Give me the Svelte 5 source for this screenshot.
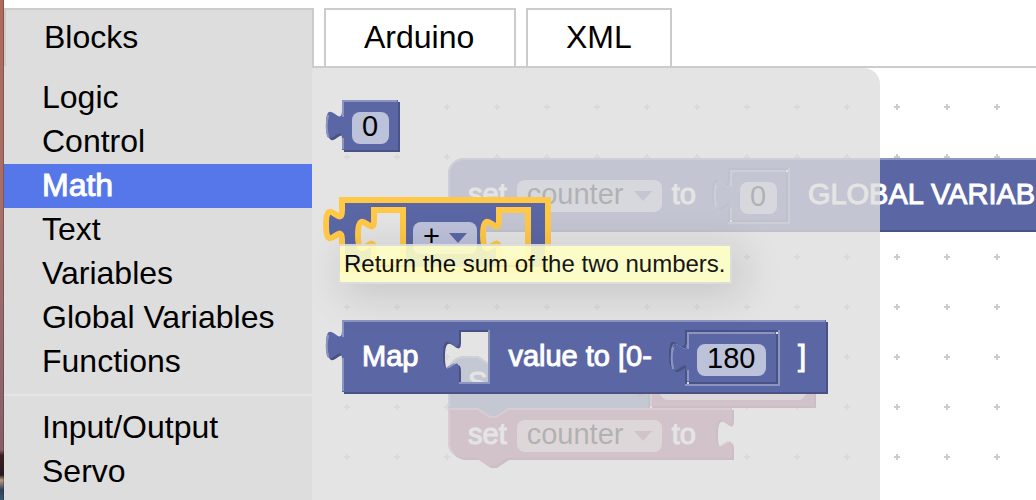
<script>
  const tabs = ['Blocks', 'Arduino', 'XML'];
  const groups = [
    ['Logic', 'Control', 'Math', 'Text', 'Variables', 'Global Variables', 'Functions'],
    ['Input/Output', 'Servo'],
  ];
  let tab = $state('Blocks');
  let category = $state('Math');

  const NUMBER = { fill: '#5b67a5', light: '#8c95c0', dark: '#495284' };
  const VARIABLE = { fill: '#a55b80', light: '#c08ca6', dark: '#844966' };
  const SERVO = { fill: '#5b74a5', light: '#8c9ec0', dark: '#495d84' };

  // Path pieces, in block units (one unit is two pixels).
  const TAB_DOWN = 'v 5 c 0,10 -8,-8 -8,7.5 s 8,-2.5 8,7.5';
  const NOTCH_BACK = 'H 29.5 l -6,4 -3,0 -6,-4';

  const hole = ([x, w, h]) => `M ${x},5 ${TAB_DOWN} v ${h - 20} h ${w} v ${-h} z`;
  const holeLight = ([x, w, h]) =>
    `M ${x + w + 0.5},5 v ${h + 0.5} H ${x} M ${x - 6},24 l 3.7,-2.1`;

  function outline(b) {
    const holes = (b.holes ?? []).map(hole).join(' ');
    if (b.kind === 'output')
      return `M 0,0 H ${b.w} V ${b.h} H 0 V 20 c 0,-10 -8,8 -8,-7.5 s 8,2.5 8,-7.5 z ${holes}`;
    if (b.kind === 'root') return `M 0,8 A 8,8 0 0 1 8,0 H ${b.w} V ${b.h} H 0 z ${holes}`;
    if (b.kind === 'head')
      return `M 0,8 A 8,8 0 0 1 8,0 H 15 l 6,4 3,0 6,-4 H ${b.w} V ${b.h} ${NOTCH_BACK} H 0 z`;
    return `M 0,0 H 15 l 6,4 3,0 6,-4 H ${b.w} ${TAB_DOWN} V ${b.h} ${NOTCH_BACK} H 8 a 8,8 0 0 1 -8,-8 z`;
  }

  function highlight(b) {
    const r = b.w - 0.5;
    const low = b.h - 0.5;
    const holes = (b.holes ?? []).map(holeLight).join(' ');
    if (b.kind === 'output')
      return `M 0.5,0.5 H ${r} M 0.5,${low} V 19 m -7.4,-0.5 q -1.5,-5.5 0,-11 m 7.4,1 V 0.5 H 1 ${holes}`;
    if (b.kind === 'root') return `M 0.5,${low} V 8 A 7.5,7.5 0 0 1 8,0.5 H ${r} ${holes}`;
    if (b.kind === 'head')
      return `M 0.5,${low} V 8 A 7.5,7.5 0 0 1 8,0.5 H 15 l 6,4 3,0 6,-4 H ${r}`;
    return `M 0.5,${b.h - 8} V 0.5 H 15 l 6,4 3,0 6,-4 H ${r} M ${b.w - 5.5},19 l 3.7,-2.1 M 2.4,${b.h - 2.4} A 7.5,7.5 0 0 1 0.5,${b.h - 8}`;
  }

  const globalSet = { kind: 'root', w: 324, h: 36, holes: [[140, 30, 27]], ...NUMBER };
  const servoSet = { kind: 'head', w: 100, h: 26, ...SERVO };
  const servoValue = { kind: 'output', w: 82, h: 25, ...VARIABLE };
  const variableSet = { kind: 'tail', w: 142, h: 25, ...VARIABLE };
  const number = { kind: 'output', w: 28, h: 25, ...NUMBER };
  const wideNumber = { kind: 'output', w: 44.5, h: 25, ...NUMBER };
  const sum = { kind: 'output', w: 103, h: 35, holes: [[16, 14.5, 26], [78.5, 14.5, 26]], selected: true, ...NUMBER };
  const map = { kind: 'output', w: 242, h: 36, holes: [[58.5, 14.5, 26], [171.5, 46.5, 27]], ...NUMBER };
</script>

{#snippet shape(b)}
  <svg class="shape" width={b.w * 2} height={b.h * 2} viewBox="0 0 {b.w} {b.h}" aria-hidden="true">
    {#if b.selected}
      <path d={outline(b)} fill={b.fill} fill-rule="evenodd" stroke="#ffc846" stroke-width="3" />
    {:else}
      <path d={outline(b)} fill={b.dark} fill-rule="evenodd" transform="translate(1 1)" />
      <path d={outline(b)} fill={b.fill} fill-rule="evenodd" />
      <path d={highlight(b)} fill="none" stroke={b.light} stroke-width="1" />
    {/if}
  </svg>
{/snippet}

{#snippet dropdown(value, label, colour, size)}
  <span class="dropdown {size}">
    <select aria-label={label}><option>{value}</option></select>
    <svg width="18" height="10" viewBox="0 0 18 10" aria-hidden="true"><path d="M0 0H18L9 10z" fill={colour} /></svg>
  </span>
{/snippet}

<div class="page">
  <div class="backdrop"></div>
  <main>
    <nav class="tabs">
      {#each tabs as name}
        <button class:on={tab === name} onclick={() => (tab = name)}>{name}</button>
      {/each}
    </nav>
    <div class="editor">
      <aside>
        {#each groups as group}
          <ul>
            {#each group as name}
              <li><button class:on={category === name} onclick={() => (category = name)}>{name}</button></li>
            {/each}
          </ul>
        {/each}
      </aside>

      <section class="canvas">
        <svg class="dots" width="100%" height="100%" aria-hidden="true">
          <defs>
            <pattern id="dots" x="10" y="14" width="50" height="50" patternUnits="userSpaceOnUse">
              <path d="M22 25h6M25 22v6" stroke="#ccc" stroke-width="2" />
            </pattern>
          </defs>
          <rect width="100%" height="100%" fill="url(#dots)" />
        </svg>

        <div class="block tall" style="left:136px;top:90px">
          {@render shape(globalSet)}
          <span class="label">set</span>
          {@render dropdown('counter', 'Global variable', '#5b67a5', 'wide')}
          <span class="label">to</span>
          <span class="socket one"></span>
          <span class="label">GLOBAL VARIABLE</span>
        </div>
        <div class="block value" style="left:418px;top:102px">
          {@render shape(number)}
          <input class="digit" aria-label="Initial value" value="0" />
        </div>

        <div class="block" style="left:136px;top:288px">
          {@render shape(servoSet)}
          <span class="label">Set</span>
        </div>
        <div class="block value" style="left:338px;top:288px">
          {@render shape(servoValue)}
          <span class="slot"></span>
        </div>
        <div class="block" style="left:136px;top:340px">
          {@render shape(variableSet)}
          <span class="label">set</span>
          {@render dropdown('counter', 'Variable', '#a55b80', 'wide')}
          <span class="label">to</span>
        </div>

        <div class="flyout"></div>

        <div class="block value" style="left:30px;top:32px">
          {@render shape(number)}
          <input class="digit" aria-label="Number" value="0" />
        </div>
        <div class="block sum" style="left:30px;top:132px">
          {@render shape(sum)}
          <span class="socket empty"></span>
          {@render dropdown('+', 'Operation', '#5b67a5', 'narrow')}
        </div>
        <div class="block tall" style="left:30px;top:252px">
          {@render shape(map)}
          <span class="label">Map</span>
          <span class="socket empty"></span>
          <span class="label">value to [0-</span>
          <span class="socket three"></span>
          <span class="label">]</span>
        </div>
        <div class="block value" style="left:375px;top:264px">
          {@render shape(wideNumber)}
          <input class="digits" aria-label="Upper bound" value="180" />
        </div>

        <div class="tooltip" role="tooltip">Return the sum of the two numbers.</div>
      </section>
    </div>
  </main>
</div>

<style>
  :global(body) {
    background: #fff;
    font-family: "Liberation Sans", Arial, sans-serif;
  }
  .page {
    display: flex;
    min-height: 100vh;
    overflow: hidden;
  }
  .backdrop {
    flex: none;
    width: 4px;
    background:
      linear-gradient(90deg, transparent 70%, rgba(60, 20, 20, 0.5)),
      linear-gradient(#ad6a5d, #a3706b 45%, #85606a 88%, #84606a 90%, #3a2024 91%, #241a22 95%, #b59a86 96%, #2b4257 98%, #385970);
  }
  main {
    flex: 1;
    min-width: 0;
    display: flex;
    flex-direction: column;
  }
  button {
    font: inherit;
    color: #000;
    margin: 0;
    border: 0;
    cursor: pointer;
  }
  .tabs {
    display: grid;
    grid-template-columns: 310px 192px 146px;
    column-gap: 10px;
    padding-top: 8px;
    font-size: 32px;
    line-height: 36px;
    background: linear-gradient(#ccc, #ccc) 0 100% / 100% 2px no-repeat;
  }
  .tabs button {
    height: 58px;
    margin-bottom: 2px;
    padding: 9px 38px 11px;
    border: 2px solid #ccc;
    border-bottom: 0;
    background: #fff;
    text-align: left;
  }
  .tabs .on {
    background: #ddd;
    box-shadow: -2px 2px 0 #ddd;
    clip-path: inset(0 0 -2px 0);
  }
  .editor {
    flex: 1;
    display: flex;
  }
  aside {
    flex: none;
    width: 308px;
    padding-top: 8px;
    box-sizing: border-box;
    background: #ddd;
    font-size: 32px;
    line-height: 40px;
  }
  ul {
    list-style: none;
    margin: 0;
    padding: 0;
  }
  ul + ul {
    margin-top: 10px;
    padding-top: 10px;
    border-top: 2px solid #e5e5e5;
  }
  li button {
    display: block;
    width: 100%;
    padding: 1px 8px 3px 38px;
    background: none;
    text-align: left;
    white-space: nowrap;
  }
  li .on {
    background: #5577ea;
    color: #fff;
    -webkit-text-stroke: 1px #fff;
  }
  .canvas {
    flex: 1;
    position: relative;
    overflow: hidden;
  }
  .dots {
    position: absolute;
    inset: 0;
  }
  .block {
    position: absolute;
    display: flex;
    align-items: center;
    gap: 10px;
    height: 32px;
    padding: 12px 20px 8px;
    color: #fff;
    font-size: 29px;
    line-height: 32px;
    white-space: nowrap;
  }
  .label {
    padding-bottom: 4px;
    -webkit-text-stroke: 1px #fff;
  }
  .tall {
    padding-top: 22px;
  }
  .sum {
    padding: 22px 11px 16px;
  }
  .value {
    padding-left: 10px;
  }
  .shape {
    position: absolute;
    left: 0;
    top: 0;
    overflow: visible;
  }
  .block > :not(.shape) {
    position: relative;
  }
  .socket {
    flex: none;
    margin: 0 10px;
  }
  .one {
    width: 72px;
  }
  .three {
    width: 106px;
  }
  .empty {
    width: 50px;
  }
  .sum .socket {
    margin: 0;
  }
  input,
  select,
  .slot {
    box-sizing: border-box;
    height: 32px;
    margin: 0;
    padding: 0 10px 4px;
    border: 0;
    border-radius: 8px;
    background: rgba(255, 255, 255, 0.6);
    color: #000;
    font: inherit;
    line-height: 28px;
  }
  select {
    appearance: none;
    width: 100%;
    display: block;
  }
  .digit {
    width: 37px;
  }
  .digits {
    width: 69px;
  }
  .slot {
    width: 146px;
  }
  .dropdown {
    flex: none;
  }
  .dropdown svg {
    position: absolute;
    right: 10px;
    top: 11px;
    pointer-events: none;
  }
  .wide {
    width: 145px;
  }
  .narrow {
    width: 64px;
  }
  .flyout {
    position: absolute;
    left: 0;
    top: 0;
    bottom: 0;
    width: 568px;
    border-top-right-radius: 16px;
    background: #ddd;
    opacity: 0.8;
  }
  .tooltip {
    position: absolute;
    left: 26px;
    top: 176px;
    padding: 3px 4px;
    border: 2px solid #ddd;
    background: #ffffc7;
    box-shadow: 8px 8px 40px 2px rgba(0, 0, 0, 0.15);
    color: #000;
    font-size: 24px;
    line-height: 30px;
    opacity: 0.9;
    white-space: nowrap;
  }
</style>
